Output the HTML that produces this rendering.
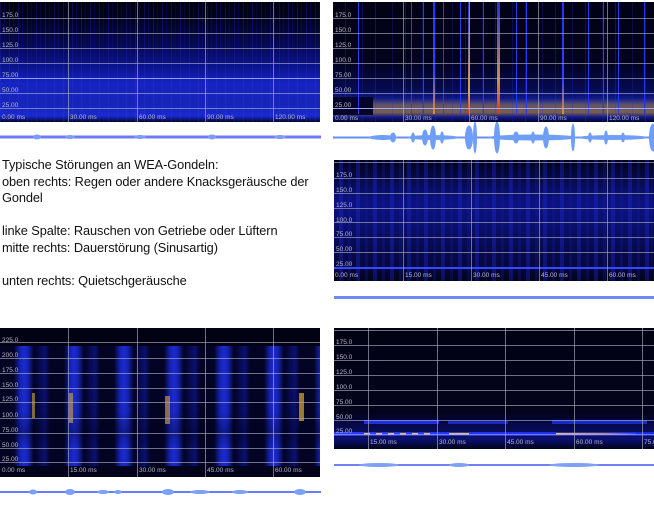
<!DOCTYPE html>
<html><head><meta charset="utf-8"><style>
body{margin:0;width:654px;height:507px;background:#fff;position:relative;overflow:hidden;font-family:"Liberation Sans",sans-serif}
.p{position:absolute;background:#02021a;overflow:hidden}
.h{position:absolute;left:0;right:0;height:1px;background:rgba(170,170,190,.65)}
.v{position:absolute;top:0;bottom:0;width:1px;background:rgba(170,170,190,.65)}
.l{position:absolute;font-size:6.5px;color:#b8b8c8;left:2px;line-height:7px}
.t{position:absolute;font-size:6.5px;color:#b8b8c8;line-height:7px}
.txt{position:absolute;left:2px;font-size:12.8px;color:#111;line-height:16.5px;letter-spacing:-0.1px}
.s{position:absolute;top:0;width:1px;height:112px;background:#2a3af0}
</style></head><body>

<!-- Panel 1 -->
<div class="p" style="left:0;top:2px;width:320px;height:120px;background:
repeating-linear-gradient(90deg,rgba(40,60,255,.22) 0 1px,transparent 1px 4px,rgba(20,30,200,.18) 4px 5px,transparent 5px 9px),
linear-gradient(180deg,#010110 0%,#030322 15%,#060850 35%,#0c1490 55%,#1624c0 68%,#1624b8 85%,#1a2ad0 95%,#05052a 100%)">
<div class="h" style="top:16px"></div><div class="h" style="top:31px"></div><div class="h" style="top:46px"></div><div class="h" style="top:61px"></div><div class="h" style="top:76px;background:rgba(160,170,255,.9)"></div><div class="h" style="top:91px"></div><div class="h" style="top:106px"></div>
<div class="v" style="left:68px"></div><div class="v" style="left:137px"></div><div class="v" style="left:205px"></div><div class="v" style="left:273px"></div>
<div class="l" style="top:10px">175.0</div><div class="l" style="top:25px">150.0</div><div class="l" style="top:40px">125.0</div><div class="l" style="top:55px">100.0</div><div class="l" style="top:70px">75.00</div><div class="l" style="top:85px">50.00</div><div class="l" style="top:100px">25.00</div>
<div class="t" style="left:2px;top:112px">0.00 ms</div><div class="t" style="left:70px;top:112px">30.00 ms</div><div class="t" style="left:139px;top:112px">60.00 ms</div><div class="t" style="left:207px;top:112px">90.00 ms</div><div class="t" style="left:275px;top:112px">120.00 ms</div>
</div>
<svg style="position:absolute;left:0;top:132px" width="322" height="10"><rect x="0" y="3.5" width="321" height="3" fill="#6f7bf5"/><g fill="#7d9cf8"><ellipse cx="37" cy="5" rx="4" ry="2.5"/><ellipse cx="70" cy="5" rx="5" ry="2"/><ellipse cx="140" cy="5" rx="6" ry="2"/><ellipse cx="212" cy="5" rx="4" ry="2.5"/><ellipse cx="280" cy="5" rx="6" ry="2"/></g></svg>

<!-- Panel 2 -->
<div class="p" style="left:333px;top:2px;width:321px;height:120px;background:
linear-gradient(180deg,transparent 0 80%,rgba(200,150,40,.45) 86%,rgba(230,170,50,.5) 92%,rgba(20,30,180,.6) 96%,#05052a 100%),
linear-gradient(180deg,#020214 0%,#03031e 50%,#060a50 72%,#1020a0 85%,#05052a 100%)">
<div style="position:absolute;left:0;top:0;width:100%;height:100%;background:repeating-linear-gradient(90deg,transparent 0 12px,rgba(40,50,255,.3) 12px 13px,transparent 13px 29px,rgba(30,40,220,.25) 29px 30px)"></div>
<div style="position:absolute;left:0;top:95px;width:40px;height:18px;background:#05052a"></div>
<div class="s" style="left:25px"></div><div class="s" style="left:78px"></div><div class="s" style="left:90px"></div><div class="s" style="left:110px"></div><div class="s" style="left:127px"></div><div class="s" style="left:150px"></div><div class="s" style="left:183px"></div><div class="s" style="left:193px"></div><div class="s" style="left:255px"></div><div class="s" style="left:270px"></div><div class="s" style="left:285px"></div>
<div style="position:absolute;left:100px;top:0;width:2px;height:112px;background:linear-gradient(#2233ff,#3040ff 60%,#e09030)"></div>
<div style="position:absolute;left:135px;top:0;width:2px;height:112px;background:linear-gradient(#2030ee,#e0a040 80%,#d03020)"></div>
<div style="position:absolute;left:164px;top:0;width:3px;height:112px;background:linear-gradient(#2030ee,#d09040 70%,#e03020)"></div>
<div style="position:absolute;left:229px;top:0;width:2px;height:112px;background:linear-gradient(#2233ff,#3040ff 70%,#e09030)"></div>
<div style="position:absolute;left:311px;top:0;width:1px;height:112px;background:#2233ee"></div>
<div class="h" style="top:16px"></div><div class="h" style="top:31px"></div><div class="h" style="top:46px"></div><div class="h" style="top:61px"></div><div class="h" style="top:76px"></div><div class="h" style="top:91px"></div><div class="h" style="top:106px;background:rgba(170,180,255,.9)"></div>
<div class="v" style="left:70px"></div><div class="v" style="left:136px"></div><div class="v" style="left:205px"></div><div class="v" style="left:274px"></div>
<div class="l" style="top:10px">175.0</div><div class="l" style="top:25px">150.0</div><div class="l" style="top:40px">125.0</div><div class="l" style="top:55px">100.0</div><div class="l" style="top:70px">75.00</div><div class="l" style="top:85px">50.00</div><div class="l" style="top:100px">25.00</div>
<div class="t" style="left:2px;top:113px">0.00 ms</div><div class="t" style="left:72px;top:113px">30.00 ms</div><div class="t" style="left:138px;top:113px">60.00 ms</div><div class="t" style="left:207px;top:113px">90.00 ms</div><div class="t" style="left:276px;top:113px">120.00 ms</div>
</div>
<svg style="position:absolute;left:333px;top:122px" width="321" height="32"><rect x="0" y="14.5" width="321" height="2" fill="#6a8cf5"/><g fill="#6e9ef8"><ellipse cx="50" cy="15.5" rx="14" ry="2.5"/><ellipse cx="100" cy="15.5" rx="26" ry="2.5"/><ellipse cx="60" cy="15.5" rx="3" ry="5"/><ellipse cx="80" cy="15.5" rx="2" ry="5"/><ellipse cx="92" cy="15.5" rx="3" ry="8"/><ellipse cx="100" cy="15.5" rx="3" ry="12"/><ellipse cx="109" cy="15.5" rx="2" ry="6"/><ellipse cx="136" cy="15.5" rx="4" ry="12"/><ellipse cx="142" cy="15.5" rx="2" ry="16"/><ellipse cx="164" cy="15.5" rx="3" ry="16"/><ellipse cx="200" cy="15.5" rx="45" ry="3"/><ellipse cx="183" cy="15.5" rx="3" ry="6"/><ellipse cx="200" cy="15.5" rx="2" ry="6"/><ellipse cx="213" cy="15.5" rx="3" ry="11"/><ellipse cx="240" cy="15.5" rx="2" ry="14"/><ellipse cx="257" cy="15.5" rx="2" ry="5"/><ellipse cx="273" cy="15.5" rx="2" ry="7"/><ellipse cx="290" cy="15.5" rx="2" ry="5"/><ellipse cx="320" cy="15.5" rx="4" ry="14"/><ellipse cx="280" cy="15.5" rx="35" ry="2.5"/></g></svg>

<!-- Text -->
<div class="txt" style="top:157px">Typische Störungen an WEA-Gondeln:<br>oben rechts: Regen oder andere Knacksgeräusche der<br>Gondel<br><br>linke Spalte: Rauschen von Getriebe oder Lüftern<br>mitte rechts: Dauerstörung (Sinusartig)<br><br>unten rechts: Quietschgeräusche</div>

<!-- Panel 3 -->
<div class="p" style="left:334px;top:160px;width:320px;height:121px;background:
repeating-linear-gradient(90deg,transparent 0 5px,rgba(30,40,220,.35) 5px 9px,transparent 9px 14px,rgba(20,30,170,.25) 14px 17px),
linear-gradient(180deg,#03031c 0%,#080c55 20%,#0c1280 35%,#0a0f6a 55%,#070a48 75%,#060840 88%,#03031a 100%)">
<div style="position:absolute;left:0;right:0;top:107px;height:2px;background:#3848ff"></div>
<div class="h" style="top:2px"></div><div class="h" style="top:18px"></div><div class="h" style="top:33px"></div><div class="h" style="top:48px"></div><div class="h" style="top:62px"></div><div class="h" style="top:77px"></div><div class="h" style="top:92px"></div>
<div class="v" style="left:69px"></div><div class="v" style="left:137px"></div><div class="v" style="left:205px"></div><div class="v" style="left:273px"></div>
<div class="l" style="top:12px">175.0</div><div class="l" style="top:27px">150.0</div><div class="l" style="top:42px">125.0</div><div class="l" style="top:57px">100.0</div><div class="l" style="top:71px">75.00</div><div class="l" style="top:86px">50.00</div><div class="l" style="top:101px">25.00</div>
<div class="t" style="left:1px;top:112px">0.00 ms</div><div class="t" style="left:71px;top:112px">15.00 ms</div><div class="t" style="left:139px;top:112px">30.00 ms</div><div class="t" style="left:207px;top:112px">45.00 ms</div><div class="t" style="left:275px;top:112px">60.00 ms</div>
</div>
<div style="position:absolute;left:334px;top:296px;width:320px;height:3px;background:#7088f5"></div>

<!-- Panel 4 -->
<div class="p" style="left:0;top:328px;width:320px;height:149px;background:
linear-gradient(180deg,transparent 0 56%,rgba(0,0,30,.35) 70%,transparent 80%),
repeating-linear-gradient(90deg,#030324 0 14px,#1422b0 20px,#1a2ad0 24px,#1422b0 28px,#030324 34px,#0a1070 45px,#030324 50px),
#030320">
<div style="position:absolute;left:0;right:0;top:0;height:18px;background:#020214"></div>
<div style="position:absolute;left:0;right:0;top:138px;height:11px;background:#03031c"></div>
<div style="position:absolute;left:32px;top:65px;width:3px;height:25px;background:rgba(220,170,60,.6)"></div>
<div style="position:absolute;left:69px;top:65px;width:4px;height:30px;background:rgba(220,170,60,.6)"></div>
<div style="position:absolute;left:165px;top:68px;width:5px;height:28px;background:rgba(220,170,60,.6)"></div>
<div style="position:absolute;left:299px;top:65px;width:5px;height:28px;background:rgba(220,170,60,.7)"></div>
<div class="h" style="top:14px"></div><div class="h" style="top:30px"></div><div class="h" style="top:45px"></div><div class="h" style="top:60px"></div><div class="h" style="top:74px"></div><div class="h" style="top:90px"></div><div class="h" style="top:105px"></div><div class="h" style="top:120px"></div><div class="h" style="top:134px"></div>
<div class="v" style="left:68px"></div><div class="v" style="left:137px"></div><div class="v" style="left:205px"></div><div class="v" style="left:273px"></div>
<div class="l" style="top:9px">225.0</div><div class="l" style="top:24px">200.0</div><div class="l" style="top:39px">175.0</div><div class="l" style="top:54px">150.0</div><div class="l" style="top:68px">125.0</div><div class="l" style="top:84px">100.0</div><div class="l" style="top:99px">75.00</div><div class="l" style="top:114px">50.00</div><div class="l" style="top:128px">25.00</div>
<div class="t" style="left:2px;top:139px">0.00 ms</div><div class="t" style="left:70px;top:139px">15.00 ms</div><div class="t" style="left:139px;top:139px">30.00 ms</div><div class="t" style="left:207px;top:139px">45.00 ms</div><div class="t" style="left:275px;top:139px">60.00 ms</div>
</div>
<svg style="position:absolute;left:0;top:486px" width="322" height="12"><rect x="0" y="5" width="321" height="2" fill="#6a7cf5"/><g fill="#7aa0f8"><ellipse cx="33" cy="6" rx="4" ry="2.5"/><ellipse cx="70" cy="6" rx="5" ry="3"/><ellipse cx="103" cy="6" rx="6" ry="2"/><ellipse cx="118" cy="6" rx="4" ry="2"/><ellipse cx="168" cy="6" rx="6" ry="3"/><ellipse cx="200" cy="6" rx="10" ry="2"/><ellipse cx="240" cy="6" rx="8" ry="2"/><ellipse cx="300" cy="6" rx="6" ry="3"/></g></svg>

<!-- Panel 5 -->
<div class="p" style="left:334px;top:328px;width:320px;height:121px;background:
linear-gradient(180deg,#020214 0%,#03031c 70%,#06084a 80%,#0a1070 92%,#03031a 100%)">
<div style="position:absolute;left:0;right:0;top:104px;height:4px;background:linear-gradient(90deg,#2a3aff,#1a2ae0)"></div>
<div style="position:absolute;left:30px;top:92px;width:75px;height:4px;background:#2030e0"></div>
<div style="position:absolute;left:114px;top:93px;width:60px;height:3px;background:#1a28c0"></div>
<div style="position:absolute;left:218px;top:92px;width:95px;height:4px;background:#1a2ac8"></div>
<div style="position:absolute;left:30px;top:105px;width:70px;height:2px;background:repeating-linear-gradient(90deg,#e8c040 0 6px,#3040ff 6px 12px)"></div>
<div style="position:absolute;left:115px;top:105px;width:20px;height:2px;background:#e8c040"></div>
<div style="position:absolute;left:222px;top:105px;width:80px;height:2px;background:linear-gradient(90deg,#f0c040,#c09040 60%,#3040ff)"></div>
<div class="h" style="top:2px"></div><div class="h" style="top:17px"></div><div class="h" style="top:32px"></div><div class="h" style="top:47px"></div><div class="h" style="top:62px"></div><div class="h" style="top:77px"></div><div class="h" style="top:92px"></div><div class="h" style="top:106px"></div>
<div class="v" style="left:34px"></div><div class="v" style="left:103px"></div><div class="v" style="left:171px"></div><div class="v" style="left:240px"></div><div class="v" style="left:308px"></div>
<div class="l" style="top:11px">175.0</div><div class="l" style="top:26px">150.0</div><div class="l" style="top:41px">125.0</div><div class="l" style="top:56px">100.0</div><div class="l" style="top:71px">75.00</div><div class="l" style="top:86px">50.00</div><div class="l" style="top:100px">25.00</div>
<div class="t" style="left:36px;top:111px">15.00 ms</div><div class="t" style="left:105px;top:111px">30.00 ms</div><div class="t" style="left:173px;top:111px">45.00 ms</div><div class="t" style="left:242px;top:111px">60.00 ms</div><div class="t" style="left:310px;top:111px">75.0</div>
</div>
<svg style="position:absolute;left:334px;top:460px" width="320" height="10"><rect x="0" y="4" width="320" height="2" fill="#7080f5"/><g fill="#80a0f8"><ellipse cx="45" cy="5" rx="20" ry="2"/><ellipse cx="125" cy="5" rx="10" ry="2"/><ellipse cx="240" cy="5" rx="25" ry="2"/></g></svg>
</body></html>
